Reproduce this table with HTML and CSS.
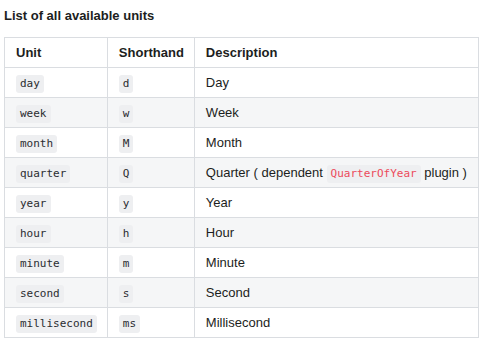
FILE: index.html
```html
<!DOCTYPE html>
<html lang="en">
<head>
    <meta charset="UTF-8">
    <title>Units</title>
    <link rel="stylesheet" href="styles.css">
</head>
<body>
    <div class="doc">
        <h4 class="title">List of all available units</h4>
        <table class="units">
            <thead>
                <tr><th class="col-unit">Unit</th><th class="col-short">Shorthand</th><th>Description</th></tr>
            </thead>
            <tbody>
                <tr><td><code>day</code></td><td><code>d</code></td><td>Day</td></tr>
                <tr><td><code>week</code></td><td><code>w</code></td><td>Week</td></tr>
                <tr><td><code>month</code></td><td><code>M</code></td><td>Month</td></tr>
                <tr><td><code>quarter</code></td><td><code>Q</code></td><td>Quarter ( dependent <code class="red">QuarterOfYear</code> plugin )</td></tr>
                <tr><td><code>year</code></td><td><code>y</code></td><td>Year</td></tr>
                <tr><td><code>hour</code></td><td><code>h</code></td><td>Hour</td></tr>
                <tr><td><code>minute</code></td><td><code>m</code></td><td>Minute</td></tr>
                <tr><td><code>second</code></td><td><code>s</code></td><td>Second</td></tr>
                <tr><td><code>millisecond</code></td><td><code>ms</code></td><td>Millisecond</td></tr>
            </tbody>
        </table>
    </div>
</body>
</html>
```
FILE: styles.css
```css
body {
    margin: 0;
    background: #fff;
    font-family: "Liberation Sans", Arial, sans-serif;
    color: #1c1e21;
}
.doc {
    padding: 0 8px 0 4px;
}
.title {
    margin: 0;
    height: 37px;
    line-height: 32px;
    font-size: 13px;
    font-weight: bold;
}
.units {
    width: 100%;
    border-collapse: collapse;
    font-size: 13px;
}
.units th,
.units td {
    border: 1px solid #dadde1;
    height: 30px;
    box-sizing: border-box;
    padding: 0 10px 0 11px;
    text-align: left;
    white-space: nowrap;
}
.units th {
    font-weight: bold;
}
.col-unit {
    width: 82px;
}
.col-short {
    width: 66px;
}
.units tbody tr:nth-child(even) {
    background: #f5f6f7;
}
code {
    font-family: "DejaVu Sans Mono", monospace;
    font-size: 11px;
    background: #eeeff1;
    border-radius: 3px;
    padding: 2px 4px 3px;
    color: #2a2c30;
}
code.red {
    color: #ec4a5b;
}
```
